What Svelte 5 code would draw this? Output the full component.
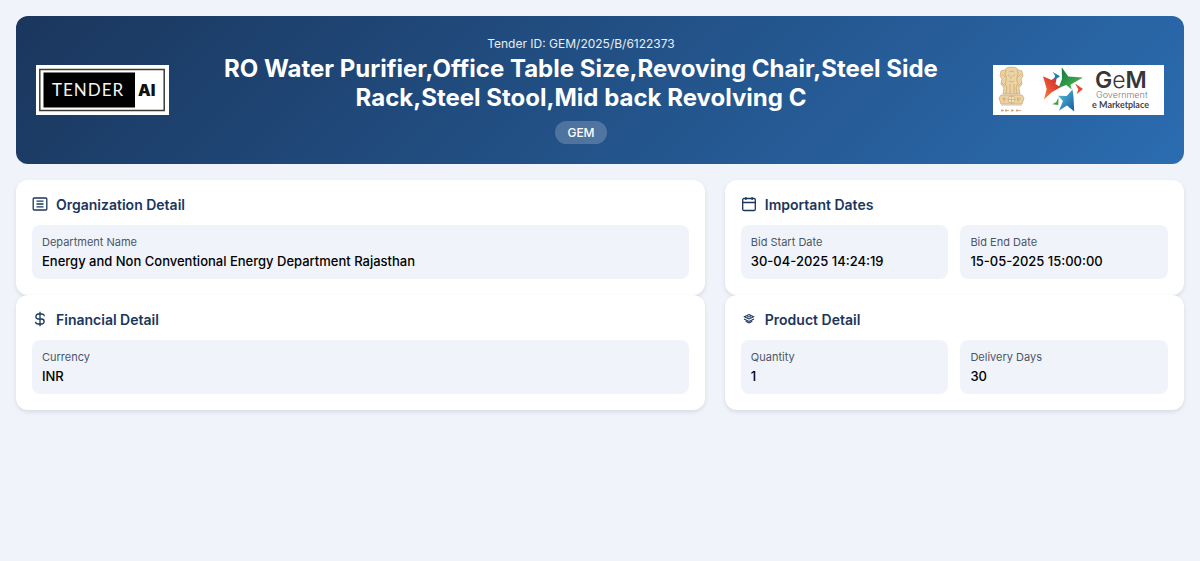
<script>
  const cards = [
    { icon: 'org', title: 'Organization Detail', fields: [['Department Name', 'Energy and Non Conventional Energy Department Rajasthan']] },
    { icon: 'calendar', title: 'Important Dates', fields: [['Bid Start Date', '30-04-2025 14:24:19'], ['Bid End Date', '15-05-2025 15:00:00']] },
    { icon: 'dollar', title: 'Financial Detail', fields: [['Currency', 'INR']] },
    { icon: 'layers', title: 'Product Detail', fields: [['Quantity', '1'], ['Delivery Days', '30']] }
  ];
</script>

<main>
  <header>
    <svg class="logo" width="133" height="50" viewBox="0 0 133 50" role="img" aria-label="Tender AI">
      <rect width="133" height="50" fill="#fff" />
      <rect x="3.8" y="4.5" width="124.4" height="41" fill="#fff" stroke="#3b3b35" stroke-width="1.5" />
      <rect x="7.500" y="7.5" width="91.500" height="35" fill="#000" />
      <text class="tender" x="16" y="31" fill="#f4f4f4">TENDER</text>
      <text class="ai" x="102" y="31" fill="#111">AI</text>
    </svg>

    <div class="heading">
      <p class="tender-id">Tender ID: GEM/2025/B/6122373</p>
      <h1>RO Water Purifier,Office Table Size,Revoving Chair,Steel Side Rack,Steel Stool,Mid back Revolving C</h1>
      <span class="badge">GEM</span>
    </div>

    <svg class="logo" width="171" height="50" viewBox="0 0 171 50" role="img" aria-label="GeM Government e Marketplace">
      <defs>
        <linearGradient id="red" x1="0" y1="1" x2="1" y2="0"><stop stop-color="#f08a3c" /><stop offset=".5" stop-color="#e34b32" /><stop offset="1" stop-color="#c92a2c" /></linearGradient>
        <linearGradient id="green" x1="0" y1="0" x2="1" y2="1"><stop stop-color="#0d7045" /><stop offset=".6" stop-color="#35a04b" /><stop offset="1" stop-color="#8cc63f" /></linearGradient>
        <linearGradient id="blue" x1="0" y1="0" x2="1" y2="1"><stop stop-color="#5cc3e0" /><stop offset="1" stop-color="#155c9f" /></linearGradient>
      </defs>
      <rect width="171" height="50" fill="#fff" />
      <g fill="#ecd3a5" stroke="#c39a5c" stroke-width=".6">
        <path d="M12 5q1-3 6.500-3t6.500 3l4 1 1 5-2 3 1 5-3 4 1 6H10l1-6-3-4 1-5-2-3 1-5z" />
        <path d="M8 30h21l2 3-2 6H8l-2-6z" />
        <path d="M13 5q-2 3 0 7 1 3-1 6l2 5-1 6M24 5q2 3 0 7-1 3 1 6l-2 5 1 6M16 7q3-2 5 0M15 10l2 1m3 0 2-1M18 11v3m-2 2q3 2 5 0M17 19v10m4-10v10M9 9l3 3m16-3-3 3M9 18l3 3m16-3-3 3" fill="none" />
        <circle cx="18.500" cy="34.500" r="3.500" fill="#f5e4c5" />
        <path d="M18.500 31v7m-3.500-3.500h7M9 34h4m-2-2v5m13-3h4m-3-2v5M8 40h21" fill="none" />
      </g>
      <path d="M8 45.500h3m1 0h4m2 0h3m2 0h5M9 44v3m4-3v3m6-3v3m5-3v3" stroke="#c98e58" stroke-width=".7" />
      <path d="m50 11.300 8.500 3.700 5.500-4-1.500 8 5 3.300-8.800 5L51 34.500 53.700 24z" fill="url(#red)" />
      <path d="m68.700 2.300 6.600 9.200L90 12.500l-12.500 7.200 1.200 4.800-5.500-4.500-7.700 3 3.500-9z" fill="url(#green)" />
      <path d="M79.500 24.500 80.500 32l.7 14.500-7.200-6-8 5.200L70 36l-5-5.300 8.700.2z" fill="url(#blue)" />
      <path d="m59.700 7 7.300 4.300-6 4 1.200-4.500z" fill="#147bb5" />
      <path d="m82 18.500 8 5.500-6.300 5 1.600-4.700z" fill="#e04a36" />
      <path d="m65.500 32.500-.2 7.500-6-.8 4-2.200z" fill="#43a047" />
      <text class="gem" x="102" y="23" fill="#373739">G<tspan class="light">e</tspan>M</text>
      <text class="government" x="103" y="33" fill="#77777b">Government</text>
      <text class="market" x="99" y="43" fill="#444448">e Marketplace</text>
    </svg>
  </header>

  <div class="cards">
    {#each cards as card}
      <section>
        <h2>
          <svg width="16" height="16" viewBox="0 0 16 16" fill="none" stroke="currentColor" stroke-width="1.3" aria-hidden="true">
            {#if card.icon === 'org'}
              <rect x="1.200" y="2" width="13.600" height="12" rx="1" />
              <path d="M4.500 5.200h7M4.500 8h7M4.500 10.800h7" />
            {:else if card.icon === 'calendar'}
              <rect x="1.700" y="2.500" width="12.600" height="12" rx="1.300" />
              <path d="M4.900 1v3M11.100 1v3M1.700 6.500h12.600" />
            {:else if card.icon === 'dollar'}
              <path d="M8 .7v14.600M12.300 5.200C12.300 3.700 11 3 9.500 3H6.400a2.500 2.500 0 0 0 0 5h3.200a2.500 2.500 0 0 1 0 5H6.300C4.700 13 3.600 12.200 3.600 10.700" />
            {:else}
              <path d="m8 3.500 4.600 2.200L8 7.900 3.400 5.700zM3 7.900l5 2.500 5-2.500M6 5.700h4M4.700 10.300 8 12l3.300-1.700" stroke-width="1.100" />
            {/if}
          </svg>
          {card.title}
        </h2>
        <dl>
          {#each card.fields as [label, value]}
            <div class="field">
              <dt>{label}</dt>
              <dd>{value}</dd>
            </div>
          {/each}
        </dl>
      </section>
    {/each}
  </div>
</main>

<style>
  :global(body) {
    margin: 0;
    background: #f0f4fa;
    font-family: Inter, sans-serif;
  }
  main {
    padding: 16px;
  }
  header {
    display: flex;
    align-items: center;
    padding: 20px;
    border-radius: 12px;
    background: linear-gradient(135deg, #1a365d, #2b6cb0);
    color: #fff;
  }
  .logo {
    flex: none;
  }
  .tender {
    font: 400 17px Lato, sans-serif;
    letter-spacing: 1px;
  }
  .ai {
    font: 900 16px Inter, sans-serif;
  }
  .gem {
    font: 600 23px Inter, sans-serif;
  }
  .light {
    font-weight: 300;
  }
  .government {
    font: 300 9px Inter, sans-serif;
  }
  .market {
    font: 700 9px Lato, sans-serif;
  }
  .heading {
    flex: 1;
    display: flex;
    flex-direction: column;
    align-items: center;
    padding: 0 20px;
    text-align: center;
  }
  .tender-id {
    margin: 0 0 3px;
    font-size: 12px;
    line-height: 15px;
    opacity: 0.9;
  }
  h1 {
    margin: 0 0 9px;
    font-size: 24px;
    line-height: 29px;
    font-weight: 700;
  }
  .badge {
    padding: 4px 12px;
    border-radius: 20px;
    background: rgba(255, 255, 255, 0.2);
    font-size: 12px;
    line-height: 15px;
    font-weight: 500;
  }
  .cards {
    display: grid;
    grid-template-columns: 3fr 2fr;
    column-gap: 20px;
    margin-top: 16px;
  }
  section {
    padding: 16px;
    border-radius: 12px;
    background: #fff;
    box-shadow: 0 2px 4px rgba(0, 0, 0, 0.1);
  }
  h2 {
    display: flex;
    align-items: flex-start;
    gap: 8px;
    margin: 0 0 12px;
    color: #1a365d;
    font-size: 14px;
    line-height: 17px;
    font-weight: 600;
  }
  dl {
    display: grid;
    grid-auto-flow: column;
    grid-auto-columns: minmax(0, 1fr);
    gap: 12px;
    margin: 0;
  }
  .field {
    padding: 10px;
    border-radius: 8px;
    background: #f0f4fa;
  }
  dt {
    margin-bottom: 4px;
    color: #4a5568;
    font-size: 11px;
    line-height: 14px;
  }
  dd {
    margin: 0;
    color: #000;
    font-size: 13px;
    line-height: 16px;
    font-weight: 500;
  }
</style>
